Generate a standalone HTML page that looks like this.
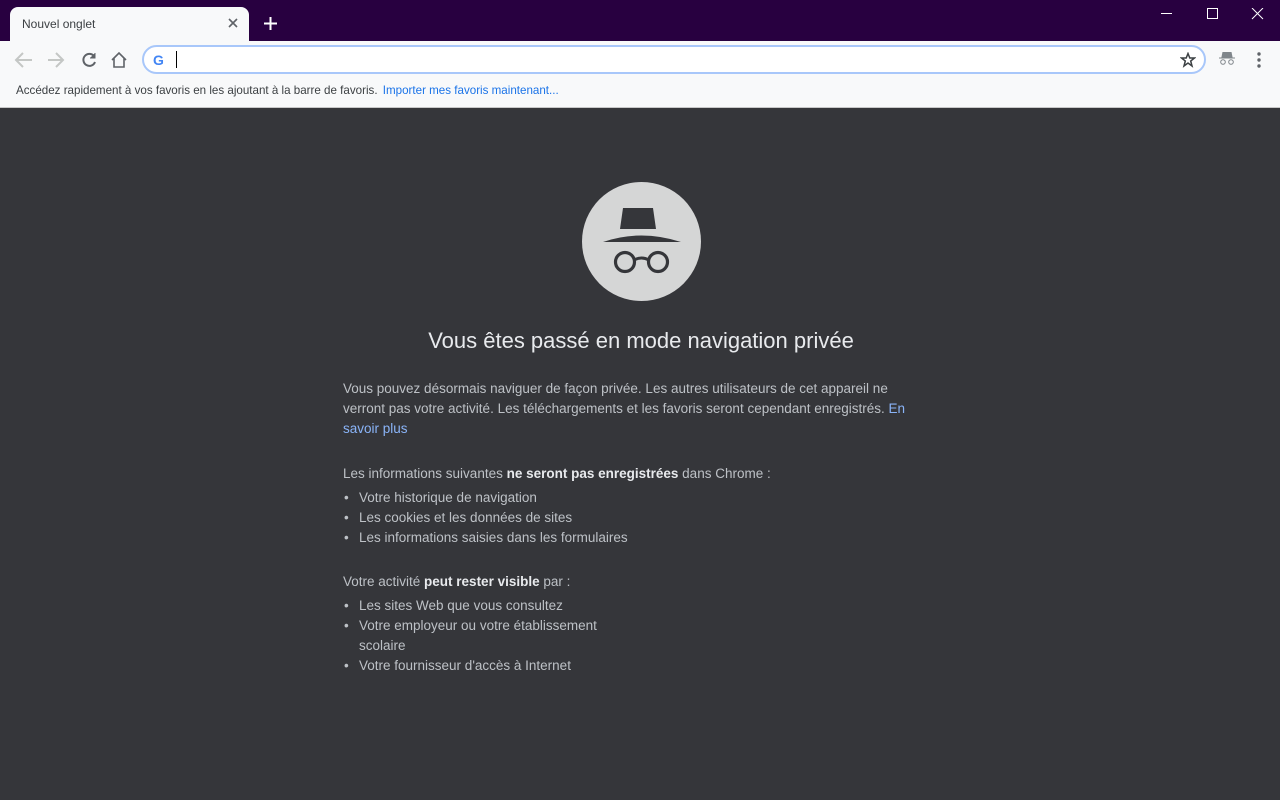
<!DOCTYPE html>
<html><head><meta charset="utf-8"><style>
*{margin:0;padding:0;box-sizing:border-box}
body{width:1280px;height:800px;overflow:hidden;background:#35363a;font-family:"Liberation Sans",Arial,sans-serif;position:relative}
.top{position:absolute;left:0;top:0;width:1280px;height:41px;background:#280040}
.tab{position:absolute;left:10px;top:7px;width:239px;height:35px;background:#f8f9fa;border-radius:8px 8px 0 0}
.tab span{position:absolute;left:12px;top:10px;font-size:12px;color:#3c4043}
.bar{position:absolute;left:0;top:41px;width:1280px;height:67px;background:#f8f9fa;border-bottom:1px solid #c8c8c8}
.omni{position:absolute;left:142px;top:4px;width:1064px;height:29px;border:2px solid #a8c7fa;border-radius:15px;background:#fff}
.bm{position:absolute;left:16px;top:43px;font-size:11.6px;color:#3c4043}
.bm a{color:#1a73e8;text-decoration:none;margin-left:2px}
.c{position:absolute;left:343px;width:590px;font-size:13.5px;line-height:20px;color:#bdc1c6}
b{color:#e8eaed}
ul{list-style:none}
li{padding-left:16px;position:relative}
li:before{content:"•";position:absolute;left:1px}
</style></head><body>
<div class="top">
<div class="tab"><span>Nouvel onglet</span>
<svg style="position:absolute;left:218px;top:11px" width="10" height="10"><path d="M1 1L9 9M9 1L1 9" stroke="#5f6368" stroke-width="1.6"/></svg></div>
<svg style="position:absolute;left:264px;top:17px" width="13" height="13"><path d="M6.5 0V13M0 6.5H13" stroke="#fff" stroke-width="2"/></svg>
<svg style="position:absolute;left:1160px;top:8px" width="110" height="12"><path d="M1 5.5H12" stroke="#fff"/><rect x="47.5" y="0.5" width="10" height="10" fill="none" stroke="#fff"/><path d="M92 0L103 11M103 0L92 11" stroke="#fff"/></svg>
</div>
<div class="bar">
<svg style="position:absolute;left:14px;top:9px" width="120" height="20" fill="none" stroke-width="2">
<path d="M18 10H3M9 3L2 10L9 17" stroke="#c4c7c5"/>
<path d="M34 10H49M42 3L49 10L42 17" stroke="#c4c7c5"/>
<path d="M80 6A6 6 0 1 0 81 12" stroke="#5f6368"/><path d="M81 3V8H76" stroke="#5f6368" fill="#5f6368" stroke-width="1"/>
<path d="M98 10L105 3L112 10M100 8V17H110V8" stroke="#5f6368" stroke-width="1.6"/>
</svg>
<div class="omni">
<span style="position:absolute;left:9px;top:5px;font-weight:bold;font-size:14px;color:#4285f4">G</span>
<div style="position:absolute;left:32px;top:4px;width:1px;height:17px;background:#000"></div>
<svg style="position:absolute;left:1036px;top:5px" width="16" height="16"><path d="M8 1.5L9.8 6H14.5L10.7 9L12 14L8 11L4 14L5.3 9L1.5 6H6.2Z" fill="none" stroke="#3c4043" stroke-width="1.5"/></svg>
</div>
<svg style="position:absolute;left:1219px;top:11px" width="16" height="14"><path d="M4 0H12L13 5H3Z M0 6H16" fill="#80868b" stroke="#80868b"/><circle cx="4" cy="10" r="2.3" fill="none" stroke="#80868b"/><circle cx="12" cy="10" r="2.3" fill="none" stroke="#80868b"/></svg>
<svg style="position:absolute;left:1257px;top:11px" width="4" height="16" fill="#5f6368"><circle cx="2" cy="2" r="1.7"/><circle cx="2" cy="8" r="1.7"/><circle cx="2" cy="14" r="1.7"/></svg>
<div class="bm">Accédez rapidement à vos favoris en les ajoutant à la barre de favoris. <a>Importer mes favoris maintenant...</a></div>
</div>
<svg style="position:absolute;left:582px;top:182px" width="120" height="120">
<circle cx="59.5" cy="59.5" r="59.5" fill="#d5d6d6"/>
<path d="M41 26H71L74 47H38Z" fill="#35363a"/>
<path d="M21 60Q59 47 99 60Z" fill="#35363a"/>
<circle cx="43" cy="80" r="9.5" fill="none" stroke="#35363a" stroke-width="3.2"/>
<circle cx="76" cy="80" r="9.5" fill="none" stroke="#35363a" stroke-width="3.2"/>
<path d="M52 78Q59.5 74 67 78" fill="none" stroke="#35363a" stroke-width="3"/>
</svg>
<div style="position:absolute;left:0;width:1282px;top:328px;text-align:center;font-size:22px;color:#e8eaed">Vous êtes passé en mode navigation privée</div>
<div class="c" style="top:379px">Vous pouvez désormais naviguer de façon privée. Les autres utilisateurs de cet appareil ne verront pas votre activité. Les téléchargements et les favoris seront cependant enregistrés. <span style="color:#8ab4f8">En savoir plus</span></div>
<div class="c" style="top:464px">Les informations suivantes <b>ne seront pas enregistrées</b> dans Chrome :
<ul style="margin-top:4px"><li>Votre historique de navigation</li><li>Les cookies et les données de sites</li><li>Les informations saisies dans les formulaires</li></ul></div>
<div class="c" style="top:572px">Votre activité <b>peut rester visible</b> par :
<ul style="margin-top:4px;width:275px"><li>Les sites Web que vous consultez</li><li>Votre employeur ou votre établissement scolaire</li><li>Votre fournisseur d'accès à Internet</li></ul></div>
</body></html>
